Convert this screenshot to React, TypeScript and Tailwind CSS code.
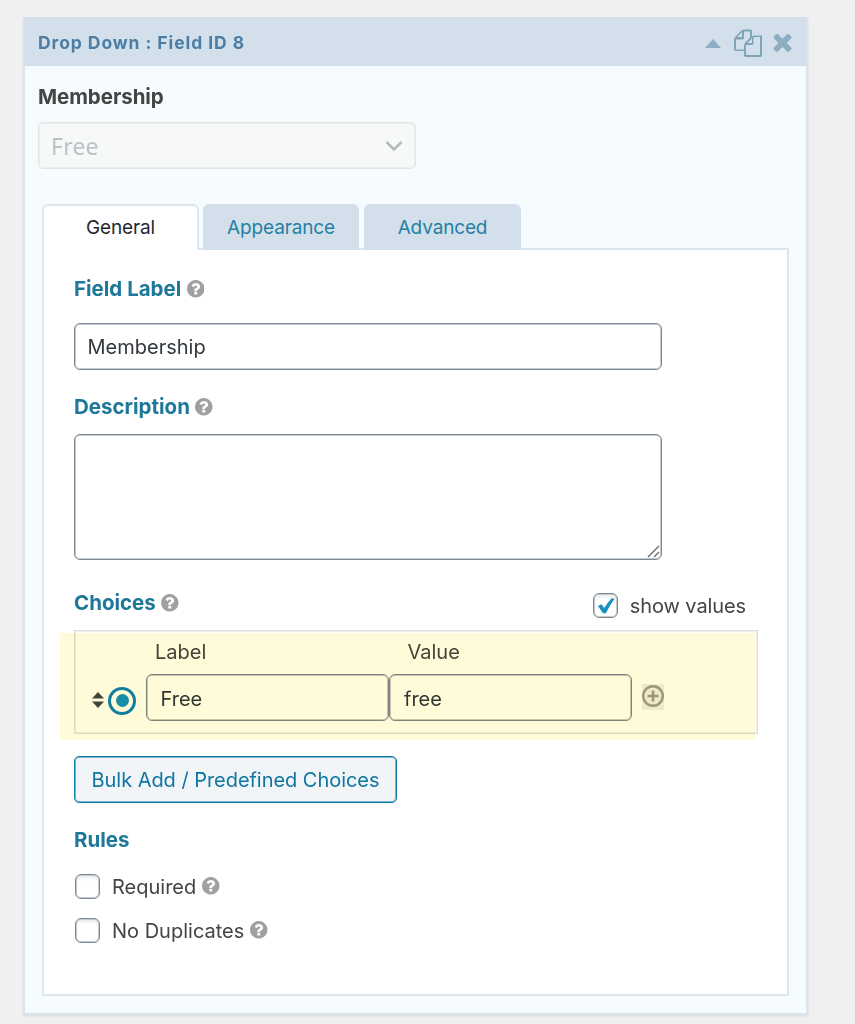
import type { ReactNode } from "react";

function Help() {
  return (
    <svg viewBox="128 128 1536 1536" className="h-[17.5px] w-[17.5px] shrink-0 fill-[#a0a0a0]">
      <path d="M1024 1376v-192q0-14-9-23t-23-9h-192q-14 0-23 9t-9 23v192q0 14 9 23t23 9h192q14 0 23-9t9-23zm256-672q0-88-55.5-163T1086 425t-170-41q-243 0-371 213-15 24 8 42l132 100q7 6 19 6 16 0 25-12 53-68 86-92 34-24 86-24 48 0 85.5 26t37.5 59q0 38-20 61t-68 45q-63 28-115.5 86.5T768 1020v36q0 14 9 23t23 9h192q14 0 23-9t9-23q0-19 21.5-49.5T1100 957q32-18 49-28.5t46-35 44.5-48 28-60.5 12.5-81zm384 192q0 209-103 385.5T1281.5 1561 896 1664t-385.5-103T231 1281.5 128 896t103-385.5T510.5 231 896 128t385.5 103T1561 510.5 1664 896z" />
    </svg>
  );
}

function CopyIcon() {
  return (
    <svg viewBox="0 0 1792 1792" className="h-[28px] w-[28px] fill-[#7fa5b9]">
      <path d="M1696 384q40 0 68 28t28 68v1216q0 40-28 68t-68 28H736q-40 0-68-28t-28-68v-288H96q-40 0-68-28t-28-68V672q0-40 20-88t48-76L476 100q28-28 76-48t88-20h416q40 0 68 28t28 68v328q68-40 128-40h416zm-544 213L853 896h299V597zM512 213L213 512h299V213zm196 647l316-316V160H640v416q0 40-28 68t-68 28H128v640h512v-256q0-40 20-88t48-76zm956 804V512h-416v416q0 40-28 68t-68 28H768v640h896z" />
    </svg>
  );
}

function CloseIcon() {
  return (
    <svg viewBox="302 238 1188 1316" className="h-[20px] w-[19px] fill-[#8eacc2]">
      <path d="M1490 1322q0 40-28 68l-136 136q-28 28-68 28t-68-28l-294-294-294 294q-28 28-68 28t-68-28l-136-136q-28-28-28-68t28-68l294-294-294-294q-28-28-28-68t28-68l136-136q28-28 68-28t68 28l294 294 294-294q28-28 68-28t68 28l136 136q28 28 28 68t-28 68l-294 294 294 294q28 28 28 68z" />
    </svg>
  );
}

function Heading({ children, help = true }: { children: ReactNode; help?: boolean }) {
  return (
    <div className="flex h-6 items-center gap-[5.5px] text-[20.5px] font-bold text-[#1e7899]">
      <span>{children}</span>
      {help && <Help />}
    </div>
  );
}

function Checkbox({ checked = false }: { checked?: boolean }) {
  return (
    <span className="flex h-[25px] w-[25px] shrink-0 items-center justify-center rounded-[6px] border border-[#7e8993] bg-white shadow-[inset_0_0_0_1px_#c3c9cd,inset_0_3px_3px_rgba(0,0,0,0.08)]">
      {checked && (
        <svg viewBox="0 0 18 18" className="ml-px h-[18px] w-[18px] fill-[#1590bf]">
          <path d="M1 9 4.600 7.200 7.200 11Q10.500 6 14.500 1.300L17.500 1.800Q12.500 9 8.800 16.200H6Z" />
        </svg>
      )}
    </span>
  );
}

function Rule({ label }: { label: string }) {
  return (
    <div className="flex h-[26px] items-center pl-px">
      <Checkbox />
      <span className="ml-3 mr-[6px] mt-px">{label}</span>
      <Help />
    </div>
  );
}

export default function App() {
  return (
    <div className="h-[1024px] w-[855px] overflow-hidden bg-[#f0f0f0] pl-[23px] pt-[17px] font-['Inter',sans-serif] text-[20px] leading-6 text-[#444]">
      <div className="h-[998px] w-[785px] border-2 border-t-0 border-[#d9e5ee] bg-[#f6fbfe] shadow-[0_1px_2px_rgba(0,0,0,0.1)]">
        <div className="-mx-px flex h-[49px] items-center bg-[#d3e0eb] pl-[14px] pr-[15px]">
          <span className="mt-[2px] text-[17.5px] font-bold tracking-[0.92px] text-[#4c7ea5]">Drop Down : Field ID 8</span>
          <svg viewBox="0 0 16 9" className="ml-auto mt-[3px] h-[9px] w-4 fill-[#8eacc2]">
            <path d="M0 9 8 0l8 9z" />
          </svg>
          <span className="ml-[13px] mr-[11px] mt-[3px]"><CopyIcon /></span>
          <span className="mt-px"><CloseIcon /></span>
        </div>

        <div className="px-[13px] pt-[18px]">
          <div className="pt-px text-[20.5px] font-bold tracking-[-0.05px]">Membership</div>
          <div className="mt-[13px] flex h-[47px] w-[378px] items-center justify-between rounded-[5px] border border-[#e1e5e6] bg-[#f7f9f9] pl-[12px] pr-[12px] shadow-[inset_0_0_0_1px_#edf0f0]">
            <span className="font-['Noto_Sans',sans-serif] text-[23px] tracking-[0.2px] text-[#bcc2c6]">Free</span>
            <svg viewBox="0 0 18 12" className="h-3 w-[18px] fill-none stroke-[#b4b9be] stroke-[2.5]">
              <path d="m1.500 2 7.500 7.500L16.500 2" />
            </svg>
          </div>
        </div>

        {/* Settings tabs */}
        <div className="ml-[17px] mt-[35px] w-[747px]">
          <div className="relative z-10 -mb-[2px] flex h-[46px] gap-[4px] text-[19px] tracking-[-0.15px]">
            <div className="flex h-full w-[157px] items-center justify-center rounded-t-[6px] border-2 border-b-0 border-[#dbe6ef] bg-white text-[#23282d]">
              <span>General</span>
            </div>
            <div className="flex w-[156px] items-center justify-center rounded-t-[6px] bg-[#d3e0eb] text-[#2580a3]">
              <span className="mt-[2px]">Appearance</span>
            </div>
            <div className="ml-px flex w-[157px] items-center justify-center rounded-t-[6px] bg-[#d3e0eb] text-[#2580a3]">
              <span className="mt-[2px]">Advanced</span>
            </div>
          </div>

          <div className="h-[748px] border-2 border-[#dbe6ef] bg-white pl-[30px] pr-[30px] pt-[27px]">
            <Heading>Field Label</Heading>
            <div className="mt-[22px] flex h-[47px] w-[588px] items-center rounded-[6px] border border-[#7e8993] pl-[12.5px] pt-px text-[#32373c] shadow-[inset_0_0_0_1px_#c3c9cd]">
              Membership
            </div>

            <div className="mt-[25px]"><Heading>Description</Heading></div>
            <div className="mt-[15px] flex h-[126px] w-[588px] items-end justify-end rounded-[6px] border border-[#7e8993] pb-px pr-px shadow-[inset_0_0_0_1px_#c3c9cd]">
              <svg viewBox="0 0 13 13" className="h-[13px] w-[13px] fill-none stroke-[#666] stroke-[1.3]">
                <path d="M1 12 12 1M7 12l5-5" />
              </svg>
            </div>

            <div className="mt-[31px] flex h-[24px] w-[672px] items-center justify-between">
              <Heading>Choices</Heading>
              <div className="mt-[5px] flex items-center gap-[12px]">
                <Checkbox checked />
                <span className="tracking-[-0.1px]">show values</span>
              </div>
            </div>

            <div className="relative mt-[15px] h-[104px] w-[684px] border border-[#dcdfe2] pt-[9px] shadow-[inset_0_0_0_1px_#eceef0]">
              <div className="flex">
                <span className="ml-[80px] w-[252.5px]">Label</span>
                <span>Value</span>
              </div>
              <div className="mt-[10px] flex items-center">
                <svg viewBox="0 0 12 16" className="ml-[17px] mt-[5px] h-4 w-3 fill-[#444]">
                  <path d="M0 6.500 6 0l6 6.500zM0 9.500 6 16l6-6.500z" />
                </svg>
                <span className="ml-[4px] mt-[6px] flex h-[28px] w-[28px] items-center justify-center rounded-full border-[3px] border-[#1180bd]">
                  <span className="h-[13px] w-[13px] rounded-full bg-[#1890c4]" />
                </span>
                <div className="ml-[10px] flex h-[47px] w-[243px] items-center rounded-[6px] border border-[#7e8993] pl-[13.5px] pt-[2px] text-[#32373c] shadow-[inset_0_0_0_1px_#c3c9cd]">Free</div>
                <div className="flex h-[47px] w-[243px] items-center rounded-[6px] border border-[#7e8993] pl-[14px] pt-[2px] text-[#32373c] shadow-[inset_0_0_0_1px_#c3c9cd]">free</div>
                <span className="-mt-[2px] ml-[10px] flex h-[26px] w-[22px] items-center justify-center bg-[#eeeeee]">
                  <svg viewBox="0 0 22 22" className="-mt-[2px] h-[22px] w-[22px] fill-none stroke-[#9d998e]">
                    <circle cx="11" cy="11" r="9.800" strokeWidth="2.400" />
                    <path d="M11 5.500v11M5.500 11h11" strokeWidth="2.600" />
                  </svg>
                </span>
              </div>
              {/* marker highlight over the choice row */}
              <div className="absolute left-[-15px] top-[2px] h-[107px] w-[695px] bg-[#fffad8] mix-blend-multiply" />
            </div>

            <div className="mt-[22px] flex h-[47px] w-[323px] items-center justify-center rounded-[5px] border border-[#0f7ba5] bg-[#f1f5f7] text-[#0f76a1] shadow-[inset_0_0_0_1px_#7cb5cc]">
              <span className="whitespace-nowrap tracking-[-0.04px]">Bulk Add / Predefined Choices</span>
            </div>

            <div className="mt-[25px]"><Heading help={false}>Rules</Heading></div>
            <div className="mt-[21px] flex flex-col gap-[18px]">
              <Rule label="Required" />
              <Rule label="No Duplicates" />
            </div>
          </div>
        </div>
      </div>
    </div>
  );
}
